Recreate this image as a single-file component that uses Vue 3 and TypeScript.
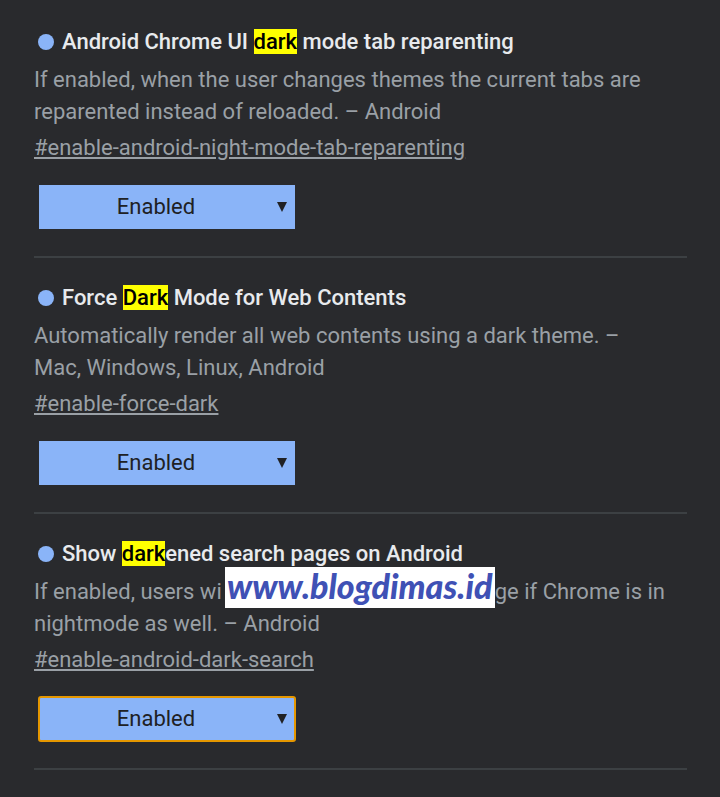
<script setup lang="ts">
import { ref } from 'vue'

interface Flag {
  id: string
  before: string
  match: string
  after: string
  description: string
  badge?: string
  rest?: string
}

const flags: Flag[] = [
  {
    id: 'enable-android-night-mode-tab-reparenting',
    before: 'Android Chrome UI ',
    match: 'dark',
    after: ' mode tab reparenting',
    description:
      'If enabled, when the user changes themes the current tabs are reparented instead of reloaded. – Android',
  },
  {
    id: 'enable-force-dark',
    before: 'Force ',
    match: 'Dark',
    after: ' Mode for Web Contents',
    description:
      'Automatically render all web contents using a dark theme. – Mac, Windows, Linux, Android',
  },
  {
    id: 'enable-android-dark-search',
    before: 'Show ',
    match: 'dark',
    after: 'ened search pages on Android',
    description: 'If enabled, users wi',
    badge: 'www.blogdimas.id',
    rest: 'ge if Chrome is in nightmode as well. – Android',
  },
]

const values = ref<string[]>(flags.map(() => 'Enabled'))
const active = ref(2)
</script>

<template>
  <main class="flags">
    <section v-for="(flag, i) in flags" :key="flag.id" class="flag">
      <h2 :id="`title-${flag.id}`" class="title">
        <span class="dot"></span>
        <span>{{ flag.before }}<mark>{{ flag.match }}</mark>{{ flag.after }}</span>
      </h2>
      <p class="description">{{ flag.description }}<span v-if="flag.badge" class="badge">{{ flag.badge }}</span>{{ flag.rest }}</p>
      <a class="permalink" :href="`#${flag.id}`">#{{ flag.id }}</a>
      <div class="picker" :class="{ active: active === i }">
        <select v-model="values[i]" :aria-labelledby="`title-${flag.id}`" @focus="active = i">
          <option>Default</option>
          <option>Enabled</option>
          <option>Disabled</option>
        </select>
        <svg class="arrow" viewBox="0 0 10 10" aria-hidden="true">
          <path d="M0 0H10L5 10Z" />
        </svg>
      </div>
    </section>
  </main>
</template>

<style>
body {
  background: #292a2d;
}
</style>

<style scoped>
.flags {
  padding: 2px 33px 24px 34px;
  background: #292a2d;
  color: #9aa0a6;
  font-family: Roboto, sans-serif;
  font-size: 22px;
  line-height: 32px;
}

.flag {
  display: flex;
  flex-direction: column;
  align-items: flex-start;
  padding: 24px 0 27px;
  border-bottom: 2px solid #3c4043;
}

.title {
  display: flex;
  align-items: center;
  gap: 8px;
  margin: 0 0 6px;
  padding-left: 4px;
  color: #e8eaed;
  font-size: 22px;
  font-weight: 500;
}

.dot {
  width: 16px;
  height: 16px;
  border-radius: 50%;
  background: #8ab4f8;
}

mark {
  background: #ff0;
  color: #000;
}

.description {
  margin: 0;
  padding-right: 20px;
}

.badge {
  display: inline-block;
  width: 270px;
  height: 41px;
  margin-top: -9px;
  margin-left: 3px;
  background: #fff;
  color: #3f51b5;
  font-family: Lato, sans-serif;
  font-size: 34px;
  font-style: italic;
  font-weight: 900;
  line-height: 38px;
  text-align: center;
  vertical-align: top;
  white-space: nowrap;
}

.permalink {
  margin-top: 4px;
  color: inherit;
  text-decoration: underline;
}

.picker {
  position: relative;
  width: 256px;
  margin: 21px 0 0 5px;
}

.picker select {
  display: block;
  width: 100%;
  height: 44px;
  padding: 0 22px 0 0;
  border: 0;
  border-radius: 0;
  outline: 0;
  appearance: none;
  background: #8ab4f8;
  color: #202124;
  font: inherit;
  text-align: center;
  text-align-last: center;
}

.picker.active select {
  border-radius: 2px;
  outline: 2px solid #e59700;
  outline-offset: -1px;
}

.arrow {
  position: absolute;
  top: 17px;
  right: 8px;
  width: 10px;
  height: 10px;
  fill: #202124;
  pointer-events: none;
}
</style>
